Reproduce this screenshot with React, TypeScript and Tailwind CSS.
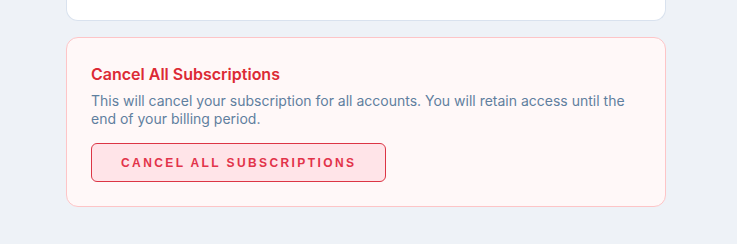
export default function App() {
  return (
    <div className="min-h-[244px] w-[737px] bg-[#eef2f7] pl-[66px]" style={{ fontFamily: "Inter, 'Noto Sans', sans-serif" }}>
      <div className="flex w-[600px] flex-col gap-[16px]">
        <div className="h-[21px] rounded-b-[12px] border-x border-b border-[#d9e2ee] bg-white" />
        <div className="rounded-[12px] border border-[#fdc5c7] bg-[#fff8f8] px-[24px] pb-[24px] pt-[25px]">
          <h2 className="text-[16px] font-semibold leading-[22px] text-[#dc2a35]">Cancel All Subscriptions</h2>
          <p className="mt-[7px] text-[14px] leading-[18px] text-[#5f7f9f]">
            This will cancel your subscription for all accounts. You will retain access until the end of your billing period.
          </p>
          <button
            className="mt-[15px] h-[39px] rounded-[6px] border border-[#dc3545] bg-[#ffe4e8] px-[29px] text-[12px] font-bold uppercase tracking-[0.2em] text-[#e2334a]"
            style={{ fontFamily: "'Liberation Sans', Arial, sans-serif" }}
          >
            Cancel All Subscriptions
          </button>
        </div>
      </div>
    </div>
  );
}
